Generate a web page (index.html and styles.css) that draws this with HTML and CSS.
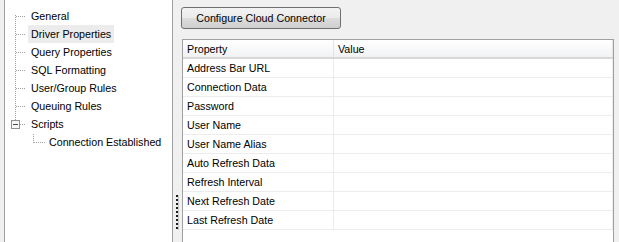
FILE: index.html
```html
<!DOCTYPE html>
<html>
<head>
<title>Connection Properties</title>
<link rel="stylesheet" href="styles.css">
</head>
<body>
<div class="window">

<div class="tree">
<div class="node first"><span class="stem"></span><span class="label">General</span></div>
<div class="node"><span class="stem"></span><span class="label selected">Driver Properties</span></div>
<div class="node"><span class="stem"></span><span class="label">Query Properties</span></div>
<div class="node"><span class="stem"></span><span class="label">SQL Formatting</span></div>
<div class="node"><span class="stem"></span><span class="label">User/Group Rules</span></div>
<div class="node"><span class="stem"></span><span class="label">Queuing Rules</span></div>
<div class="node last"><span class="stem"><svg class="toggle" width="9" height="9" viewBox="0 0 9 9"><rect x="0.5" y="0.5" width="8" height="8" fill="#f7f7f7" stroke="#919191"/><path d="M2 4.5h5" stroke="#4a4a4a"/></svg></span><span class="label">Scripts</span></div>
<div class="node child"><span class="stem"></span><span class="label">Connection Established</span></div>
</div>

<div class="splitter"><span class="grip"></span></div>

<div class="pane">
<button class="action">Configure Cloud Connector</button>
<div class="grid">
<table>
<tr class="head"><th class="prop">Property</th><th>Value</th></tr>
<tr><td class="prop">Address Bar URL</td><td></td></tr>
<tr><td class="prop">Connection Data</td><td></td></tr>
<tr><td class="prop">Password</td><td></td></tr>
<tr><td class="prop">User Name</td><td></td></tr>
<tr><td class="prop">User Name Alias</td><td></td></tr>
<tr><td class="prop">Auto Refresh Data</td><td></td></tr>
<tr><td class="prop">Refresh Interval</td><td></td></tr>
<tr><td class="prop">Next Refresh Date</td><td></td></tr>
<tr><td class="prop">Last Refresh Date</td><td></td></tr>
</table>
</div>
</div>

</div>
</body>
</html>
```

FILE: styles.css
```css
/* Connection properties dialog */

body
{ margin: 0;
background-color: #f0f0f0;
font-family: "Liberation Sans", Arial, sans-serif;
font-size: 10.7px;
color: #000;
overflow: hidden;
}

div.window
{ display: flex;
height: 242px;
overflow: hidden;
}

/* Tree */

div.tree
{ flex: none;
width: 167px;
height: 260px;
margin-left: 4px;
margin-top: -2px;
padding-top: 8px;
border: 1px solid #a0a0a0;
background-color: #fff;
}

div.node
{ display: flex;
height: 18px;
line-height: 18px;
}

span.stem
{ flex: none;
display: flex;
align-items: center;
width: 23px;
height: 18px;
background:
  repeating-linear-gradient(to right, #a0a0a0 0 1px, transparent 1px 2px) 11px 9px / 10px 1px no-repeat,
  repeating-linear-gradient(#a0a0a0 0 1px, transparent 1px 2px) 10px 0 / 1px 18px no-repeat;
}

div.first span.stem
{ background:
  repeating-linear-gradient(to right, #a0a0a0 0 1px, transparent 1px 2px) 11px 9px / 10px 1px no-repeat,
  repeating-linear-gradient(#a0a0a0 0 1px, transparent 1px 2px) 10px 8px / 1px 10px no-repeat;
}

div.last span.stem
{ background:
  repeating-linear-gradient(to right, #a0a0a0 0 1px, transparent 1px 2px) 15px 9px / 6px 1px no-repeat,
  repeating-linear-gradient(#a0a0a0 0 1px, transparent 1px 2px) 10px 0 / 1px 5px no-repeat;
}

svg.toggle
{ display: block;
margin-left: 6px;
}

div.child span.stem
{ margin-left: 18px;
background:
  repeating-linear-gradient(to right, #a0a0a0 0 1px, transparent 1px 2px) 11px 9px / 11px 1px no-repeat,
  repeating-linear-gradient(#a0a0a0 0 1px, transparent 1px 2px) 10px 1px / 1px 9px no-repeat;
}

span.label
{ padding: 0 3px;
white-space: nowrap;
}

span.selected
{ background-color: #ececec;
}

/* Splitter */

div.splitter
{ flex: none;
width: 8px;
padding-top: 195px;
}

span.grip
{ display: block;
width: 2px;
height: 35px;
margin-left: 3px;
background: repeating-linear-gradient(#1e1e1e 0 2px, transparent 2px 4px);
border-right: 1px solid #c8c8c8;
}

/* Right pane */

div.pane
{ flex: 1;
padding-top: 7px;
padding-right: 5px;
}

button.action
{ display: block;
width: 160px;
height: 22px;
padding: 0;
border: 1px solid #707070;
border-radius: 3px;
background: linear-gradient(#f2f2f2 0%, #ebebeb 50%, #dddddd 50%, #cfcfcf 100%);
font-family: "Liberation Sans", Arial, sans-serif;
font-size: 10.7px;
color: #000;
}

div.grid
{ margin-top: 10px;
margin-left: 1px;
height: 230px;
border: 1px solid #a0a0a0;
background-color: #fff;
}

div.grid table
{ width: 100%;
border-collapse: collapse;
}

div.grid th,
div.grid td
{ height: 18px;
padding: 0 0 0 4px;
text-align: left;
font-weight: normal;
white-space: nowrap;
border-bottom: 1px solid #ececec;
border-right: 1px solid #ececec;
}

div.grid th.prop,
div.grid td.prop
{ width: 146px;
}

tr.head th
{ height: 17px;
background: linear-gradient(#ffffff, #f1f2f4);
border-bottom: 2px solid #d8d8d8;
border-right: 1px solid #e3e4e6;
}
```
